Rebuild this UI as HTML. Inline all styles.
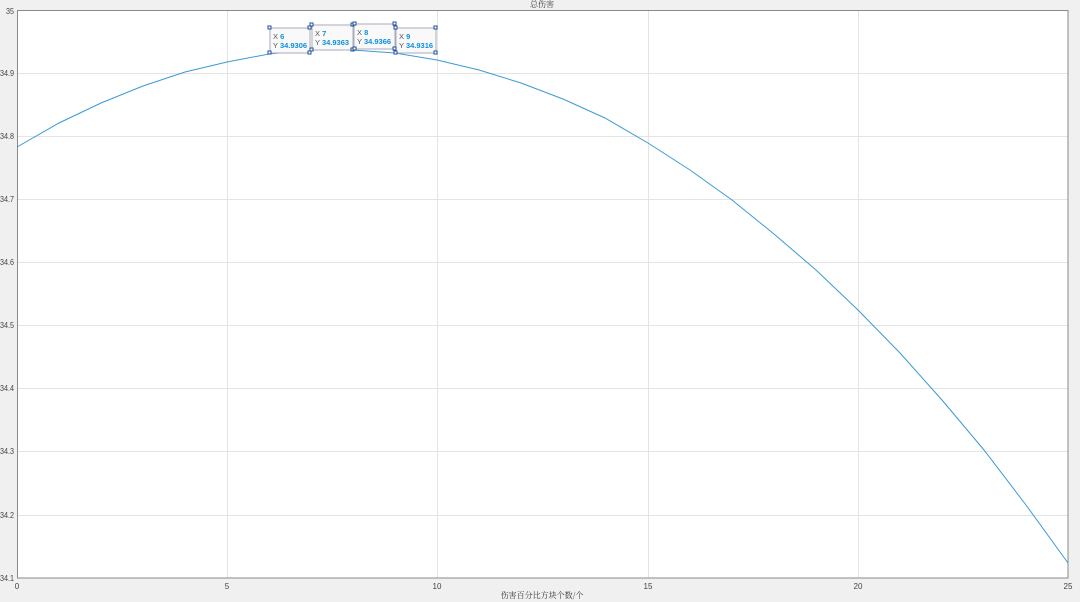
<!DOCTYPE html>
<html><head><meta charset="utf-8"><style>
html,body{margin:0;padding:0;background:#f0f0f0;}
svg{display:block;}
</style></head><body>
<svg width="1080" height="602" xmlns="http://www.w3.org/2000/svg" font-family="Liberation Sans, sans-serif">
<rect width="1080" height="602" fill="#f0f0f0"/>
<rect x="17" y="10" width="1051" height="568" fill="#fff"/>
<g stroke="#e4e4e4" stroke-width="1">
<line x1="227.5" y1="10" x2="227.5" y2="578"/><line x1="437.5" y1="10" x2="437.5" y2="578"/>
<line x1="648.5" y1="10" x2="648.5" y2="578"/><line x1="858.5" y1="10" x2="858.5" y2="578"/>
<line x1="17" y1="73.5" x2="1068" y2="73.5"/><line x1="17" y1="136.5" x2="1068" y2="136.5"/>
<line x1="17" y1="199.5" x2="1068" y2="199.5"/><line x1="17" y1="262.5" x2="1068" y2="262.5"/>
<line x1="17" y1="325.5" x2="1068" y2="325.5"/><line x1="17" y1="388.5" x2="1068" y2="388.5"/>
<line x1="17" y1="451.5" x2="1068" y2="451.5"/><line x1="17" y1="515.5" x2="1068" y2="515.5"/>
</g>
<rect x="17.5" y="10.5" width="1050.5" height="567.5" fill="none" stroke="#8a8a8a" stroke-width="1"/>
<polyline fill="none" stroke="#3b9ad6" stroke-width="1" points="17,147 59,123 101,103 143,86 185,72 227,62 269,54 311,50 353,50 395,53 437,60 479,70 521,83 563,99 605,118 648,143 690,170 732,200 774,234 816,270 858,310 900,353 942,400 984,450 1026,505 1068,563"/>
<g font-size="8" fill="#444">
<text x="6" y="14" textLength="8" lengthAdjust="spacingAndGlyphs">35</text>
<text x="0" y="76" textLength="14" lengthAdjust="spacingAndGlyphs">34.9</text>
<text x="0" y="139" textLength="14" lengthAdjust="spacingAndGlyphs">34.8</text>
<text x="0" y="202" textLength="14" lengthAdjust="spacingAndGlyphs">34.7</text>
<text x="0" y="265" textLength="14" lengthAdjust="spacingAndGlyphs">34.6</text>
<text x="0" y="328" textLength="14" lengthAdjust="spacingAndGlyphs">34.5</text>
<text x="0" y="391" textLength="14" lengthAdjust="spacingAndGlyphs">34.4</text>
<text x="0" y="454" textLength="14" lengthAdjust="spacingAndGlyphs">34.3</text>
<text x="0" y="518" textLength="14" lengthAdjust="spacingAndGlyphs">34.2</text>
<text x="0" y="581" textLength="14" lengthAdjust="spacingAndGlyphs">34.1</text>
<text x="17" y="589" text-anchor="middle">0</text>
<text x="227" y="589" text-anchor="middle">5</text>
<text x="437" y="589" text-anchor="middle">10</text>
<text x="648" y="589" text-anchor="middle">15</text>
<text x="858" y="589" text-anchor="middle">20</text>
<text x="1068" y="589" text-anchor="middle">25</text>
</g>
<text x="542" y="7" font-size="8" fill="#333" text-anchor="middle" font-family="Noto Serif CJK SC, serif">总伤害</text>
<text x="542" y="598" font-size="8" fill="#333" text-anchor="middle" font-family="Noto Serif CJK SC, serif">伤害百分比方块个数/个</text>
<g stroke="#1f4f9c" stroke-width="1" fill="#fff">
<rect x="270" y="28" width="40" height="25" fill="#f9f9f9" stroke="#aab"/>
<rect x="312" y="25" width="41" height="25" fill="#f9f9f9" stroke="#aab"/>
<rect x="354" y="24" width="41" height="25" fill="#f9f9f9" stroke="#aab"/>
<rect x="396" y="28" width="40" height="25" fill="#f9f9f9" stroke="#aab"/>
<rect x="268" y="26" width="3" height="3"/><rect x="308" y="26" width="3" height="3"/><rect x="268" y="51" width="3" height="3"/><rect x="308" y="51" width="3" height="3"/>
<rect x="310" y="23" width="3" height="3"/><rect x="351" y="23" width="3" height="3"/><rect x="310" y="48" width="3" height="3"/><rect x="351" y="48" width="3" height="3"/>
<rect x="353" y="22" width="3" height="3"/><rect x="393" y="22" width="3" height="3"/><rect x="353" y="47" width="3" height="3"/><rect x="393" y="47" width="3" height="3"/>
<rect x="394" y="26" width="3" height="3"/><rect x="434" y="26" width="3" height="3"/><rect x="394" y="51" width="3" height="3"/><rect x="434" y="51" width="3" height="3"/>
</g>
<g font-size="7.5">
<text x="273" y="39" fill="#555">X <tspan fill="#0a8fe0" font-weight="bold">6</tspan></text>
<text x="273" y="48" fill="#555">Y <tspan fill="#0a8fe0" font-weight="bold">34.9306</tspan></text>
<text x="315" y="36" fill="#555">X <tspan fill="#0a8fe0" font-weight="bold">7</tspan></text>
<text x="315" y="45" fill="#555">Y <tspan fill="#0a8fe0" font-weight="bold">34.9363</tspan></text>
<text x="357" y="35" fill="#555">X <tspan fill="#0a8fe0" font-weight="bold">8</tspan></text>
<text x="357" y="44" fill="#555">Y <tspan fill="#0a8fe0" font-weight="bold">34.9366</tspan></text>
<text x="399" y="39" fill="#555">X <tspan fill="#0a8fe0" font-weight="bold">9</tspan></text>
<text x="399" y="48" fill="#555">Y <tspan fill="#0a8fe0" font-weight="bold">34.9316</tspan></text>
</g>
</svg>
</body></html>
